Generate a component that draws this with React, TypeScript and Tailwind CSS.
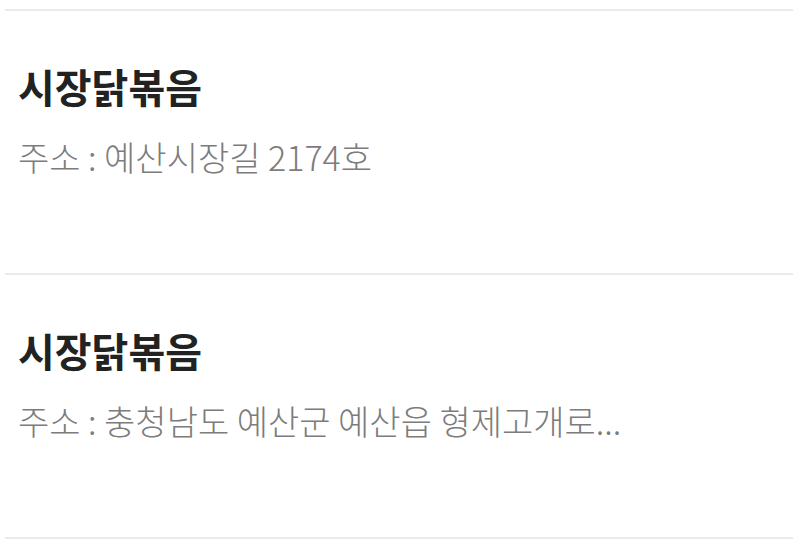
const stores = [
  { name: "시장닭볶음", address: "주소 : 예산시장길 2174호" },
  { name: "시장닭볶음", address: "주소 : 충청남도 예산군 예산읍 형제고개로..." },
];

export default function App() {
  return (
    <main className="min-h-screen bg-white pt-[9px] font-['Noto_Sans_CJK_KR','Noto_Sans',sans-serif]">
      <ul className="ml-[5px]">
        {stores.map((store, i) => (
          <li
            key={i}
            className="border-t-2 border-[#ebebeb] pl-[13px] pt-[51px] pb-[92px]"
          >
            <h2 className="text-[40px] font-bold leading-[48px] text-[#222222]">
              {store.name}
            </h2>
            <p className="mt-[23px] text-[34px] font-light leading-[48px] text-[#7c7c7c]">
              {store.address}
            </p>
          </li>
        ))}
        <li className="border-t-2 border-[#ebebeb]" />
      </ul>
    </main>
  );
}
